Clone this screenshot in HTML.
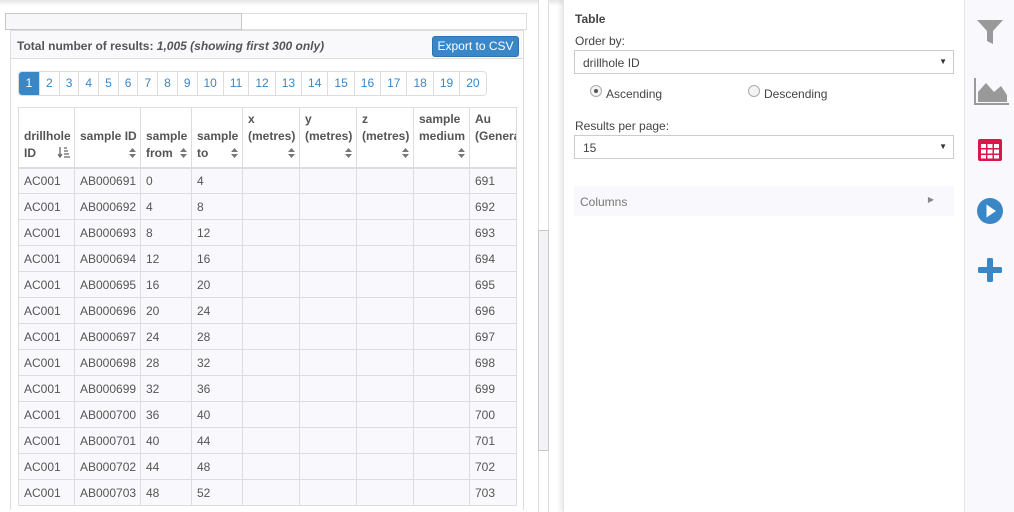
<!DOCTYPE html>
<html><head><meta charset="utf-8"><style>
*{box-sizing:border-box;margin:0;padding:0}
body{width:1014px;height:512px;overflow:hidden;background:#fff;font-family:"Liberation Sans",Arial,sans-serif;font-size:12px;color:#555;position:relative}
.topshadow{position:absolute;left:0;top:0;width:1014px;height:6px;background:linear-gradient(#e6e6e6,rgba(255,255,255,0))}
.hscroll{position:absolute;left:5px;top:13px;width:522px;height:17px;border:1px solid #ddd;background:#fff}
.hthumb{position:absolute;left:5px;top:13px;width:237px;height:17px;border:1px solid #c8c8c8;background:#f7f7fa}
.panel{position:absolute;left:10px;top:30px;width:514px;height:480px;border:1px solid #ddd;border-bottom:none;background:#fff}
.phead{height:28px;background:#f9f9fc;border-bottom:1px solid #ddd;padding:8px 0 0 6px;font-weight:bold;color:#555}
.phead i{font-weight:bold}
.btn{position:absolute;left:421px;top:5px;width:87px;height:21px;background:#3a87c8;color:#fff;border:1px solid #2f74b0;border-radius:3px;font-size:12px;text-align:center;line-height:19px}
.pag{position:absolute;left:7px;top:40px;height:25px;display:flex;border:1px solid #ddd;border-radius:4px;overflow:hidden}
.pag span{border-left:1px solid #ddd;color:#3a87c8;text-align:center;line-height:23px;font-size:12px;padding:0 6px}
.pag span:first-child{border-left:none;background:#3a87c8;color:#fff;width:20px;padding:0}
table{position:absolute;left:7px;top:76px;border-collapse:collapse;table-layout:fixed;width:498px}
td,th{border:1px solid #ddd;font-size:12px;color:#555;vertical-align:middle;padding:0 5px;white-space:nowrap;overflow:hidden}
th{font-weight:bold;height:60px;vertical-align:bottom;padding:0 4px 5px 5px;line-height:17px;text-align:left;position:relative;border-bottom:2px solid #ddd}
th svg{position:absolute;right:4px;bottom:9px}
td{height:26px;background:#f9f9fd}
.vscroll{position:absolute;left:538px;top:0;width:11px;height:512px;border-left:1px solid #ddd;border-right:1px solid #ddd;background:#fff}
.vthumb{position:absolute;left:538px;top:230px;width:11px;height:221px;border:1px solid #c8c8c8;background:#f3f3f6}
.right{position:absolute;left:563px;top:0;width:401px;height:512px;background:#fff;box-shadow:-3px 0 4px rgba(0,0,0,.08);border-left:1px solid #e4e4e4}
.side{position:absolute;left:964px;top:0;width:50px;height:512px;background:#f9f9fd;border-left:1px solid #e4e4e4}
.lbl{position:absolute;left:11px;color:#444;font-size:12px}
.sel{position:absolute;left:10px;width:380px;height:24px;border:1px solid #ccc;background:#fff;padding:5px 8px;font-size:12px;color:#444}
.sel:after{content:"▼";position:absolute;right:6px;top:6px;font-size:8px;color:#333}
.radio{position:absolute;width:12px;height:12px;border:1px solid #aaa;border-radius:50%;background:#f4f4f4}
.radio.on:after{content:"";position:absolute;left:3px;top:3px;width:4px;height:4px;border-radius:50%;background:#555}
.cols{position:absolute;left:10px;top:186px;width:380px;height:30px;background:#f9f9fd;padding:9px 6px;color:#777}
</style></head><body>
<div class="topshadow"></div>
<div class="hscroll"></div><div class="hthumb"></div>
<div class="panel">
<div class="phead">Total number of results: <i>1,005 (showing first 300 only)</i></div>
<div class="btn">Export to CSV</div>
<div class="pag"><span>1</span><span>2</span><span>3</span><span>4</span><span>5</span><span>6</span><span>7</span><span>8</span><span>9</span><span>10</span><span>11</span><span>12</span><span>13</span><span>14</span><span>15</span><span>16</span><span>17</span><span>18</span><span>19</span><span>20</span></div>
<table>
<colgroup><col style="width:56px"><col style="width:66px"><col style="width:51px"><col style="width:51px"><col style="width:57px"><col style="width:57px"><col style="width:57px"><col style="width:56px"><col style="width:47px"></colgroup>
<tr>
<th>drillhole<br>ID<svg width="12" height="11" viewBox="0 0 12 11"><path d="M2 0V9M0 7L2 10L4 7" stroke="#666" stroke-width="1.3" fill="none"/><path d="M6 1H9M6 4H10M6 7H11M6 10H12" stroke="#666" stroke-width="1.2"/></svg></th>
<th>sample ID<br>&nbsp;<svg width="7" height="10" viewBox="0 0 7 10"><path d="M0 4L3.5 0L7 4ZM0 6L3.5 10L7 6Z" fill="#777"/></svg></th>
<th>sample<br>from<svg width="7" height="10" viewBox="0 0 7 10"><path d="M0 4L3.5 0L7 4ZM0 6L3.5 10L7 6Z" fill="#777"/></svg></th>
<th>sample<br>to<svg width="7" height="10" viewBox="0 0 7 10"><path d="M0 4L3.5 0L7 4ZM0 6L3.5 10L7 6Z" fill="#777"/></svg></th>
<th>x<br>(metres)<br>&nbsp;<svg width="7" height="10" viewBox="0 0 7 10"><path d="M0 4L3.5 0L7 4ZM0 6L3.5 10L7 6Z" fill="#777"/></svg></th>
<th>y<br>(metres)<br>&nbsp;<svg width="7" height="10" viewBox="0 0 7 10"><path d="M0 4L3.5 0L7 4ZM0 6L3.5 10L7 6Z" fill="#777"/></svg></th>
<th>z<br>(metres)<br>&nbsp;<svg width="7" height="10" viewBox="0 0 7 10"><path d="M0 4L3.5 0L7 4ZM0 6L3.5 10L7 6Z" fill="#777"/></svg></th>
<th>sample<br>medium<br>&nbsp;<svg width="7" height="10" viewBox="0 0 7 10"><path d="M0 4L3.5 0L7 4ZM0 6L3.5 10L7 6Z" fill="#777"/></svg></th>
<th>Au<br>(General)<br>&nbsp;</th></tr>
<tr><td>AC001</td><td>AB000691</td><td>0</td><td>4</td><td></td><td></td><td></td><td></td><td>691</td></tr>
<tr><td>AC001</td><td>AB000692</td><td>4</td><td>8</td><td></td><td></td><td></td><td></td><td>692</td></tr>
<tr><td>AC001</td><td>AB000693</td><td>8</td><td>12</td><td></td><td></td><td></td><td></td><td>693</td></tr>
<tr><td>AC001</td><td>AB000694</td><td>12</td><td>16</td><td></td><td></td><td></td><td></td><td>694</td></tr>
<tr><td>AC001</td><td>AB000695</td><td>16</td><td>20</td><td></td><td></td><td></td><td></td><td>695</td></tr>
<tr><td>AC001</td><td>AB000696</td><td>20</td><td>24</td><td></td><td></td><td></td><td></td><td>696</td></tr>
<tr><td>AC001</td><td>AB000697</td><td>24</td><td>28</td><td></td><td></td><td></td><td></td><td>697</td></tr>
<tr><td>AC001</td><td>AB000698</td><td>28</td><td>32</td><td></td><td></td><td></td><td></td><td>698</td></tr>
<tr><td>AC001</td><td>AB000699</td><td>32</td><td>36</td><td></td><td></td><td></td><td></td><td>699</td></tr>
<tr><td>AC001</td><td>AB000700</td><td>36</td><td>40</td><td></td><td></td><td></td><td></td><td>700</td></tr>
<tr><td>AC001</td><td>AB000701</td><td>40</td><td>44</td><td></td><td></td><td></td><td></td><td>701</td></tr>
<tr><td>AC001</td><td>AB000702</td><td>44</td><td>48</td><td></td><td></td><td></td><td></td><td>702</td></tr>
<tr><td>AC001</td><td>AB000703</td><td>48</td><td>52</td><td></td><td></td><td></td><td></td><td>703</td></tr>
</table>
</div>
<div class="vscroll"></div><div class="vthumb"></div>
<div class="right">
<div class="lbl" style="top:12px;font-weight:bold">Table</div>
<div class="lbl" style="top:34px">Order by:</div>
<div class="sel" style="top:50px">drillhole ID</div>
<div class="radio on" style="left:26px;top:85px"></div><div class="lbl" style="left:42px;top:87px">Ascending</div>
<div class="radio" style="left:184px;top:85px"></div><div class="lbl" style="left:200px;top:87px">Descending</div>
<div class="lbl" style="top:119px">Results per page:</div>
<div class="sel" style="top:135px">15</div>
<div class="cols">Columns<span style="position:absolute;right:20px;top:9px;font-size:8px;color:#888">▶</span></div>
</div>
<div class="side">
<svg style="position:absolute;left:12px;top:20px" width="26" height="25" viewBox="0 0 26 25"><path d="M0 0H26L16 11V24L10 21V11Z" fill="#999"/></svg>
<svg style="position:absolute;left:9px;top:78px" width="35" height="27" viewBox="0 0 35 27"><path d="M1 0V26H35" stroke="#999" stroke-width="2" fill="none"/><path d="M4 24V14L12 5L20 14L27 8L33 17V24Z" fill="#999"/></svg>
<svg style="position:absolute;left:12px;top:138px" width="26" height="24" viewBox="0 0 26 24"><rect x="1" y="1" width="24" height="22" rx="2" fill="#d9174b"/><g fill="#fff"><rect x="4" y="6" width="5" height="4"/><rect x="10.5" y="6" width="5" height="4"/><rect x="17" y="6" width="5" height="4"/><rect x="4" y="11.5" width="5" height="4"/><rect x="10.5" y="11.5" width="5" height="4"/><rect x="17" y="11.5" width="5" height="4"/><rect x="4" y="17" width="5" height="3.5"/><rect x="10.5" y="17" width="5" height="3.5"/><rect x="17" y="17" width="5" height="3.5"/></g></svg>
<svg style="position:absolute;left:12px;top:198px" width="26" height="26" viewBox="0 0 26 26"><circle cx="13" cy="13" r="13" fill="#3a87c8"/><path d="M9.5 6.5L19 13L9.5 19.5Z" fill="#fff"/></svg>
<svg style="position:absolute;left:13px;top:258px" width="24" height="24" viewBox="0 0 24 24"><rect x="9" y="0" width="6" height="24" rx="1.5" fill="#3a87c8"/><rect x="0" y="9" width="24" height="6" rx="1.5" fill="#3a87c8"/></svg>
</div>
</body></html>
